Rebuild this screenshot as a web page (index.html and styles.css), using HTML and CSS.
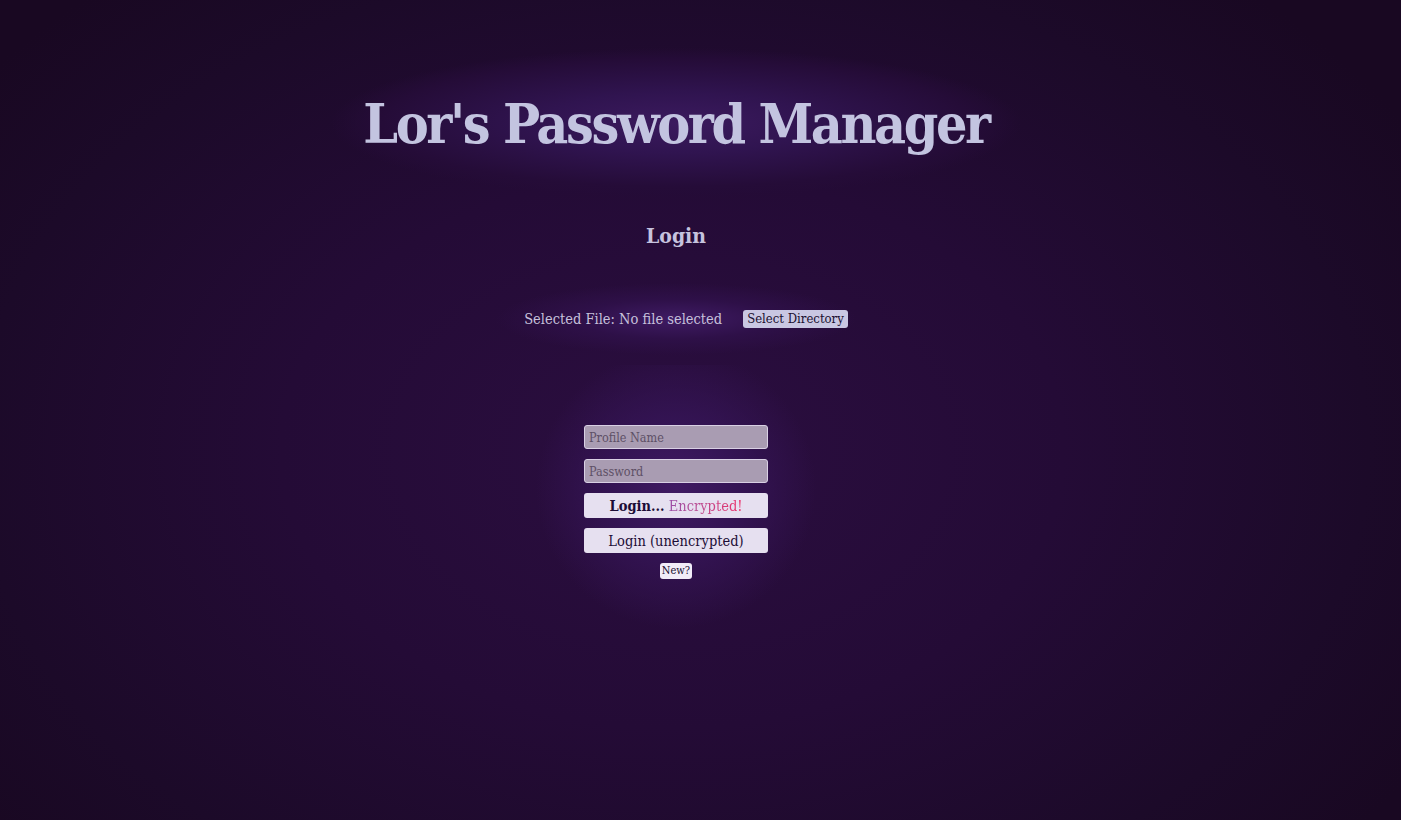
FILE: index.html
```html
<!DOCTYPE html>
<html lang="en">
<head>
<meta charset="utf-8">
<title>Lor's Password Manager</title>
<link rel="stylesheet" href="styles.css">
</head>
<body>
<main class="page">
  <header class="title-wrap">
    <h1 class="title">Lor's Password Manager</h1>
  </header>
  <h2 class="subtitle">Login</h2>
  <section class="file-row">
    <span class="file-label">Selected File: No file selected</span>
    <button class="dir-btn" type="button">Select Directory</button>
  </section>
  <form class="login-form">
    <input class="field" type="text" placeholder="Profile Name">
    <input class="field" type="password" placeholder="Password">
    <button class="btn" type="button"><b class="btn-strong">Login...</b> <span class="enc">Encrypted!</span></button>
    <button class="btn" type="button">Login (unencrypted)</button>
    <button class="new-btn" type="button">New?</button>
  </form>
</main>
</body>
</html>
```
FILE: styles.css
```css
html, body {
  margin: 0;
  padding: 0;
  height: 100%;
}
body {
  font-family: "DejaVu Serif Condensed", "DejaVu Serif", "Liberation Serif", serif;
  background: radial-gradient(ellipse 62% 75% at 48% 55%, #2b0e40 0%, #240b36 45%, #1c0a29 80%, #190822 100%);
  color: #c4c3de;
  min-height: 820px;
}
.page {
  width: 1352px;
  display: flex;
  flex-direction: column;
  align-items: center;
}
.title-wrap {
  margin-top: 48px;
  width: 690px;
  height: 150px;
  display: flex;
  align-items: center;
  justify-content: center;
  background: radial-gradient(ellipse 50% 50% at 50% 50%, #3b1a5e 0%, #301450 40%, #250c38 85%, rgba(37,12,56,0) 100%);
}
.title {
  margin: 0;
  font-size: 55px;
  font-weight: bold;
  color: #c3c4e0;
  letter-spacing: -2.4px;
  line-height: 1;
}
.subtitle {
  margin: 23px 0 0;
  font-size: 21px;
  font-weight: bold;
  color: #c6c3df;
  line-height: 30px;
}
.file-row {
  margin-top: 28px;
  box-sizing: border-box;
  width: 360px;
  height: 80px;
  padding-left: 20px;
  display: flex;
  align-items: center;
  justify-content: center;
  gap: 21px;
  background: radial-gradient(ellipse 50% 45% at 50% 50%, #3f1b64 0%, #2e1048 55%, rgba(36,11,54,0) 100%);
}
.file-label {
  font-size: 14.5px;
  color: #c7c1dc;
}
.dir-btn {
  font-family: inherit;
  font-size: 13px;
  color: #1a1030;
  background: #c9c7e2;
  border: none;
  border-radius: 3px;
  padding: 1px 4px;
  height: 18px;
  line-height: 16px;
}
.login-form {
  margin-top: 6px;
  padding: 60px 100px;
  display: flex;
  flex-direction: column;
  align-items: center;
  gap: 10px;
  background: radial-gradient(circle 140px at 50% 45%, #3f1a62 0%, #341454 45%, rgba(40,12,60,0) 100%);
}
.field {
  box-sizing: border-box;
  width: 184px;
  height: 24px;
  background: #a99cb2;
  border: 1px solid #d9d0e4;
  border-radius: 3px;
  padding: 0 4px;
  font-family: inherit;
  font-size: 12.5px;
  color: #3a2a44;
}
.field::placeholder {
  color: #5e5066;
}
.btn {
  box-sizing: border-box;
  width: 184px;
  height: 25px;
  background: #e6e0f0;
  border: none;
  border-radius: 3px;
  font-family: inherit;
  font-size: 14.5px;
  color: #1c0c36;
  padding: 0;
}
.btn-strong {
  font-weight: bold;
}
.enc {
  background: linear-gradient(90deg, #9a4ea6 0%, #c24a8c 50%, #ec2e68 100%);
  -webkit-background-clip: text;
  background-clip: text;
  color: transparent;
}
.new-btn {
  font-family: inherit;
  font-size: 11px;
  background: #f1ecf8;
  color: #1a1030;
  border: none;
  border-radius: 3px;
  padding: 1px 2px;
  height: 16px;
  line-height: 14px;
}
```
